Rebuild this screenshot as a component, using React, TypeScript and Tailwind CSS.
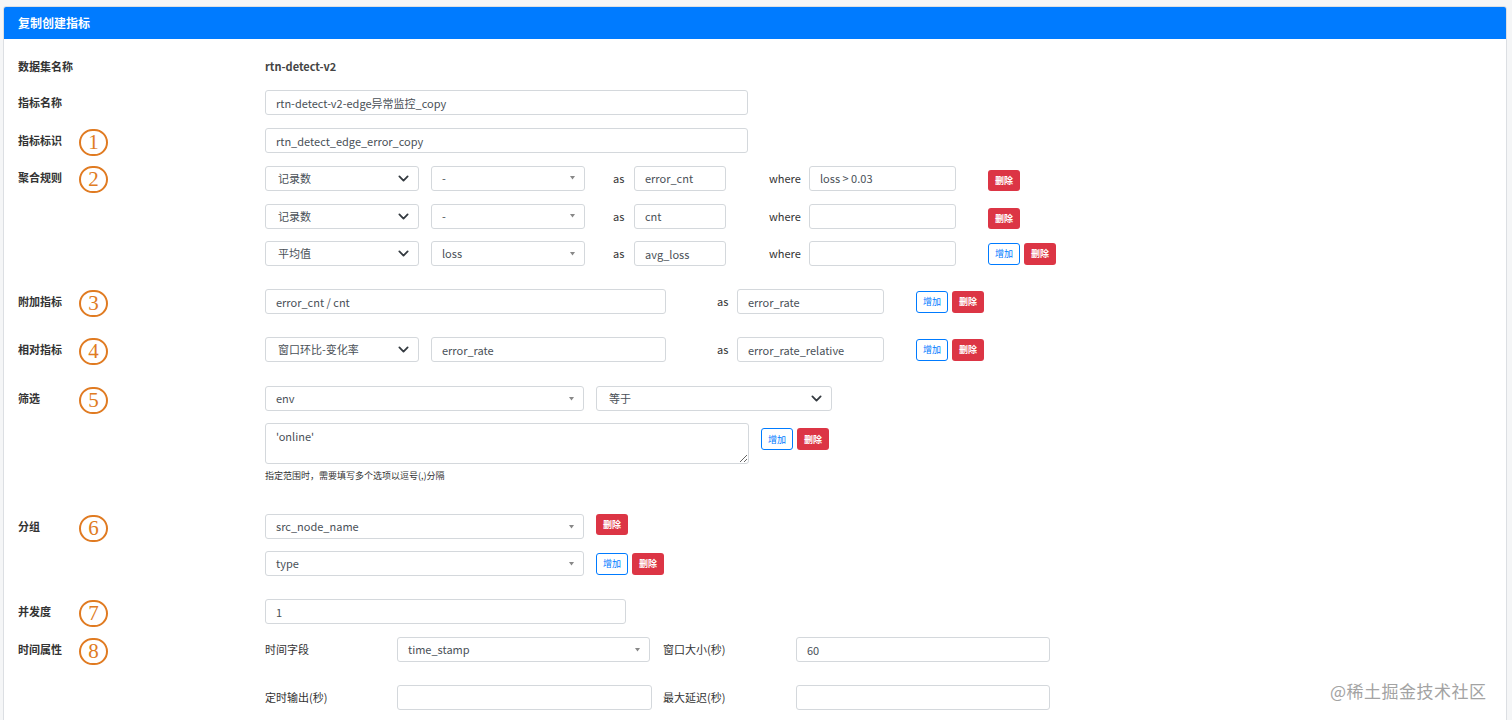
import { ReactNode } from 'react'

const FONT = "font-['Noto_Sans_CJK_SC','Noto_Sans',sans-serif]"

function Num({ n }: { n: number }) {
  return (
    <span className="w-[29px] h-[27px] shrink-0 rounded-full border-2 border-[#e07b22] text-[#e07b22] flex items-center justify-center font-['Liberation_Serif',serif] text-[21px] leading-none translate-y-[2px]">
      {n}
    </span>
  )
}

function Row({
  label,
  num,
  className = '',
  children,
}: {
  label: string
  num?: number
  className?: string
  children: ReactNode
}) {
  return (
    <div className={`flex ${className}`}>
      <div className="w-[247px] shrink-0 h-[25px] flex items-center">
        <span className="w-[61px] text-[11px] font-bold text-[#333]">{label}</span>
        {num && <Num n={num} />}
      </div>
      <div className="flex flex-col gap-3">{children}</div>
    </div>
  )
}

function Input({ w, value = '' }: { w: string; value?: string }) {
  return (
    <input
      readOnly
      defaultValue={value}
      className={`${w} h-[25px] shrink-0 px-[10px] text-[11px] text-[#495057] bg-white border border-[#d4d8dc] rounded-[3px] outline-none`}
    />
  )
}

function Select({ w, value }: { w: string; value: string }) {
  return (
    <div
      className={`${w} h-[25px] shrink-0 pl-[12px] pr-[9px] flex items-center justify-between text-[11px] text-[#495057] bg-white border border-[#d4d8dc] rounded-[3px]`}
    >
      <span>{value}</span>
      <svg width="11" height="11" viewBox="0 0 16 16">
        <path d="M2 5l6 6 6-6" fill="none" stroke="#343a40" strokeWidth="2.6" strokeLinecap="round" strokeLinejoin="round" />
      </svg>
    </div>
  )
}

function Select2({ w, value }: { w: string; value: string }) {
  return (
    <div
      className={`${w} h-[25px] shrink-0 pl-[10px] pr-[9px] flex items-center justify-between text-[11px] text-[#495057] bg-white border border-[#d4d8dc] rounded-[3px]`}
    >
      <span>{value}</span>
      <svg width="5" height="4" viewBox="0 0 5 4">
        <path d="M0 0h5L2.5 3.5z" fill="#888" />
      </svg>
    </div>
  )
}

function Add() {
  return (
    <button className="w-[32px] h-[22px] shrink-0 rounded-[3px] border border-[#007bff] bg-white text-[#007bff] text-[9px] leading-none">
      增加
    </button>
  )
}

function Del({ small }: { small?: boolean }) {
  return (
    <button
      className={`w-[32px] ${small ? 'h-[21px]' : 'h-[22px]'} shrink-0 rounded-[3px] bg-[#dc3545] text-white text-[9px] font-bold leading-none`}
    >
      删除
    </button>
  )
}

function Txt({ w, pl, children }: { w: string; pl: string; children: ReactNode }) {
  return <span className={`${w} ${pl} shrink-0 text-[11px] text-[#333]`}>{children}</span>
}

function AggRow({
  fn,
  field,
  alias,
  where,
  last,
}: {
  fn: string
  field: string
  alias: string
  where: string
  last?: boolean
}) {
  return (
    <div className="flex items-center">
      <Select w="w-[154px]" value={fn} />
      <div className="w-[12px] shrink-0" />
      <Select2 w="w-[154px]" value={field} />
      <Txt w="w-[49px]" pl="pl-[28px]">as</Txt>
      <Input w="w-[92px]" value={alias} />
      <Txt w="w-[83px]" pl="pl-[43px]">where</Txt>
      <Input w="w-[147px]" value={where} />
      {last ? (
        <div className="flex gap-[4px] pl-[32px]">
          <Add />
          <Del />
        </div>
      ) : (
        <div className="pl-[32px] self-start">
          <Del small />
        </div>
      )}
    </div>
  )
}

export default function App() {
  return (
    <div className={`relative min-h-screen bg-[#f5f6f7] pl-[3px] pr-[5px] pt-[6px] ${FONT}`}>
      <div className="bg-white border border-[#dcdfe3] rounded-[3px] overflow-hidden">
        <div className="h-[32px] bg-[#007bff] flex items-center px-[14px] text-white text-[12px] font-bold">
          复制创建指标
        </div>
        <div className="pl-[14px] pt-[15px] pb-[24px]">
          <Row label="数据集名称" className="mb-[11px]">
            <div className="h-[25px] flex items-center text-[11px] font-bold text-[#444]">rtn-detect-v2</div>
          </Row>
          <Row label="指标名称" className="mb-[13px]">
            <Input w="w-[483px]" value="rtn-detect-v2-edge异常监控_copy" />
          </Row>
          <Row label="指标标识" num={1} className="mb-[12px]">
            <Input w="w-[483px]" value="rtn_detect_edge_error_copy" />
          </Row>
          <Row label="聚合规则" num={2} className="mb-[23px]">
            <AggRow fn="记录数" field="-" alias="error_cnt" where="loss > 0.03" />
            <AggRow fn="记录数" field="-" alias="cnt" where="" />
            <AggRow fn="平均值" field="loss" alias="avg_loss" where="" last />
          </Row>
          <Row label="附加指标" num={3} className="mb-[23px]">
            <div className="flex items-center">
              <Input w="w-[401px]" value="error_cnt / cnt" />
              <Txt w="w-[71px]" pl="pl-[51px]">as</Txt>
              <Input w="w-[147px]" value="error_rate" />
              <div className="flex gap-[4px] pl-[32px]">
                <Add />
                <Del />
              </div>
            </div>
          </Row>
          <Row label="相对指标" num={4} className="mb-[24px]">
            <div className="flex items-center">
              <Select w="w-[154px]" value="窗口环比-变化率" />
              <div className="w-[12px] shrink-0" />
              <Input w="w-[235px]" value="error_rate" />
              <Txt w="w-[71px]" pl="pl-[51px]">as</Txt>
              <Input w="w-[147px]" value="error_rate_relative" />
              <div className="flex gap-[4px] pl-[32px]">
                <Add />
                <Del />
              </div>
            </div>
          </Row>
          <Row label="筛选" num={5} className="mb-[32px]">
            <div className="flex items-center gap-3">
              <Select2 w="w-[319px]" value="env" />
              <Select w="w-[236px]" value="等于" />
            </div>
            <div>
              <div className="flex items-start gap-3">
                <textarea
                  readOnly
                  defaultValue="'online'"
                  className="w-[484px] h-[41px] px-[10px] py-[4px] text-[11px] text-[#495057] border border-[#d4d8dc] rounded-[3px] outline-none"
                />
                <div className="flex gap-[4px] mt-[5px]">
                  <Add />
                  <Del />
                </div>
              </div>
              <div className="mt-[6px] text-[9px] leading-[12px] text-[#333]">
                指定范围时，需要填写多个选项以逗号(,)分隔
              </div>
            </div>
          </Row>
          <Row label="分组" num={6} className="mb-[23px]">
            <div className="flex items-start gap-3">
              <Select2 w="w-[319px]" value="src_node_name" />
              <Del small />
            </div>
            <div className="flex items-center gap-3">
              <Select2 w="w-[319px]" value="type" />
              <div className="flex gap-[4px]">
                <Add />
                <Del />
              </div>
            </div>
          </Row>
          <Row label="并发度" num={7} className="mb-[13px]">
            <Input w="w-[361px]" value="1" />
          </Row>
          <Row label="时间属性" num={8}>
            <div className="flex flex-col gap-[23px]">
              <div className="flex items-center">
                <Txt w="w-[132px]" pl="pl-0">时间字段</Txt>
                <Select2 w="w-[253px]" value="time_stamp" />
                <Txt w="w-[146px]" pl="pl-[13px]">窗口大小(秒)</Txt>
                <Input w="w-[254px]" value="60" />
              </div>
              <div className="flex items-center">
                <Txt w="w-[132px]" pl="pl-0">定时输出(秒)</Txt>
                <Input w="w-[255px]" />
                <Txt w="w-[144px]" pl="pl-[11px]">最大延迟(秒)</Txt>
                <Input w="w-[254px]" />
              </div>
            </div>
          </Row>
        </div>
      </div>
      <div className="absolute left-[1330px] top-[678px] text-[17px] text-[#a3a3a3] tracking-[0.5px]">
        @稀土掘金技术社区
      </div>
    </div>
  )
}
